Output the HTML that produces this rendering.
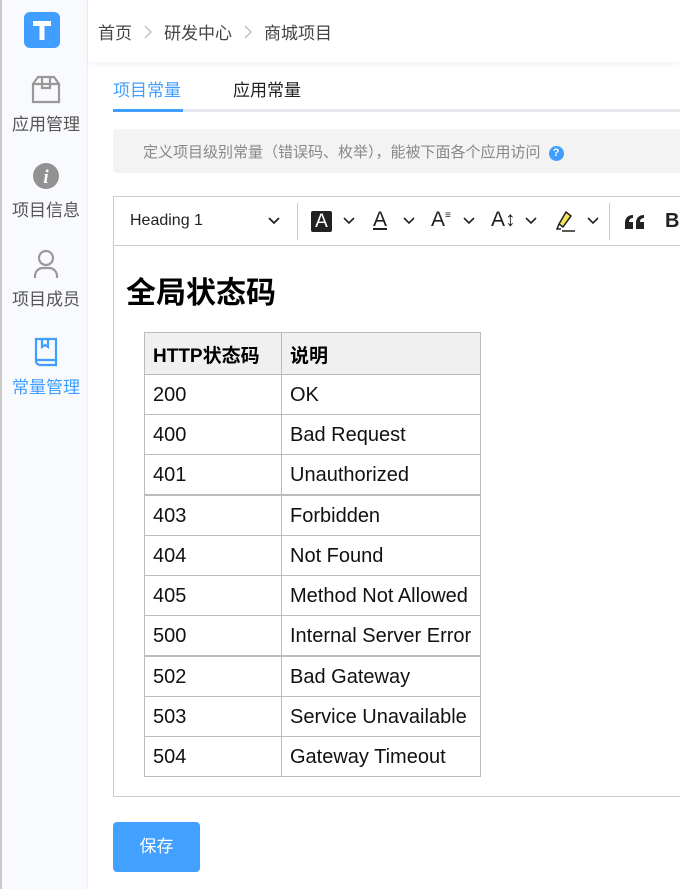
<!DOCTYPE html>
<html><head><meta charset="utf-8"><style>
*{margin:0;padding:0;box-sizing:border-box}
body{width:680px;height:889px;overflow:hidden;background:#fff;font-family:"Liberation Sans","Noto Sans CJK SC",sans-serif;position:relative}
.side{position:absolute;left:0;top:0;width:88px;height:889px;background:#f8fafd;border-left:2px solid #c8c8c8;border-right:1px solid #eef0f3}
.logo{position:absolute;left:22px;top:12px;width:36px;height:36px;background:#409eff;border-radius:6px}
.item{position:absolute;left:0;width:88px;text-align:center;font-size:17px;color:#555}
.item svg{display:block;margin:0 auto 6px}
.hdr{position:absolute;left:88px;top:0;right:0;height:62px;box-shadow:0 2px 6px rgba(0,0,0,.06);font-size:17px;color:#444;padding:19px 0 0 10px}
.hdr svg{margin:0 12px;vertical-align:0}
.tabs{position:absolute;left:113px;top:76px;right:0;height:36px;border-bottom:3px solid #e4e7ed;font-size:17px}
.tabs span{position:absolute;top:0}
.tabs .a{left:0;color:#409eff}
.tabs .bar{position:absolute;left:0;bottom:-3px;width:70px;height:3px;background:#409eff}
.info{position:absolute;left:113px;top:129px;right:0;height:44px;background:#f3f3f3;border-radius:4px 0 0 4px;font-size:15px;color:#888;padding:12px 0 0 30px}
.q{display:inline-block;width:15px;height:15px;border-radius:50%;background:#409eff;color:#fff;font-size:11px;font-weight:bold;text-align:center;line-height:15px;vertical-align:1px;margin-left:4px}
.ed{position:absolute;left:113px;top:196px;width:580px;height:601px;border:1px solid #ccc}
.tb{height:49px;border-bottom:1px solid #ccc;position:relative;font-size:16px;color:#222}
.cv{position:absolute;top:20px}
h1{position:absolute;left:12px;top:71px;font-size:30px;font-weight:bold;color:#000}
table{position:absolute;left:30px;top:135px;border-collapse:collapse;font-size:20px;color:#111}
td,th{border:1px solid #bbb;height:40px;padding:2px 8px 0;text-align:left;white-space:nowrap}
th{background:#f0f0f0;height:42px;font-weight:bold;color:#000;font-size:19px}
td:first-child,th:first-child{width:137px}
td:last-child,th:last-child{width:199px}
.btn{position:absolute;left:113px;top:822px;width:87px;height:50px;background:#42a0ff;border-radius:4px;color:#fff;font-size:17px;text-align:center;line-height:50px}
</style></head><body>
<div class="side">
<div class="logo"><svg width="36" height="36" viewBox="0 0 36 36"><path d="M9 9h18v5h-6.5v14h-5V14H9z" fill="#fff"/></svg></div>
<div class="item" style="top:74px"><svg width="30" height="30" viewBox="0 0 30 30" fill="none" stroke="#999" stroke-width="2.2"><path d="M2 10h26v18H2zM2 10l5-7h16l5 7M11 3v11h8V3"/></svg>应用管理</div>
<div class="item" style="top:162px"><svg width="28" height="28" viewBox="0 0 28 28"><circle cx="14" cy="14" r="13" fill="#929292"/><text x="14" y="21" font-size="19" font-style="italic" font-weight="bold" fill="#fff" text-anchor="middle" font-family="Liberation Serif">i</text></svg>项目信息</div>
<div class="item" style="top:249px"><svg width="28" height="30" viewBox="0 0 28 30" fill="none" stroke="#999" stroke-width="2.2"><circle cx="14" cy="9" r="7"/><path d="M3 29v-2a8 8 0 0 1 8-8h6a8 8 0 0 1 8 8v2"/></svg>项目成员</div>
<div class="item" style="top:337px;color:#409eff"><svg width="24" height="30" viewBox="0 0 24 30" fill="none" stroke="#409eff" stroke-width="2.2"><path d="M2 2h20v26H6a4 4 0 0 1-4-4zM2 23h20M8 2v8l3-2 3 2V2"/></svg>常量管理</div>
</div>
<div class="hdr">首页<svg width="8" height="14" viewBox="0 0 8 14"><path d="M1 1l6 6-6 6" fill="none" stroke="#bbb" stroke-width="1.3"/></svg>研发中心<svg width="8" height="14" viewBox="0 0 8 14"><path d="M1 1l6 6-6 6" fill="none" stroke="#bbb" stroke-width="1.3"/></svg>商城项目</div>
<div class="tabs"><span class="a">项目常量</span><span style="left:120px;color:#222">应用常量</span><div class="bar"></div></div>
<div class="info">定义项目级别常量（错误码、枚举），能被下面各个应用访问 <span class="q">?</span></div>
<div class="ed">
<div class="tb">
<span style="position:absolute;left:16px;top:15px">Heading 1</span>
<svg class="cv" style="left:154px" width="12" height="8" viewBox="0 0 12 8"><path d="M1 1l5 5 5-5" fill="none" stroke="#222" stroke-width="1.8"/></svg>
<div style="position:absolute;left:183px;top:6px;width:1px;height:37px;background:#ccc"></div>
<div style="position:absolute;left:197px;top:14px;width:21px;height:21px;background:#222;border-radius:2px;color:#fff;font-size:19px;text-align:center;line-height:21px">A</div>
<svg class="cv" style="left:229px" width="12" height="8" viewBox="0 0 12 8"><path d="M1 1l5 5 5-5" fill="none" stroke="#222" stroke-width="1.6"/></svg>
<span style="position:absolute;left:259px;top:11px;font-size:21px;text-decoration:underline">A</span>
<svg class="cv" style="left:289px" width="12" height="8" viewBox="0 0 12 8"><path d="M1 1l5 5 5-5" fill="none" stroke="#222" stroke-width="1.6"/></svg>
<span style="position:absolute;left:317px;top:11px;font-size:21px">A<small style="font-size:10px;vertical-align:8px">≡</small></span>
<svg class="cv" style="left:349px" width="12" height="8" viewBox="0 0 12 8"><path d="M1 1l5 5 5-5" fill="none" stroke="#222" stroke-width="1.6"/></svg>
<span style="position:absolute;left:377px;top:11px;font-size:21px">A↕</span>
<svg class="cv" style="left:411px" width="12" height="8" viewBox="0 0 12 8"><path d="M1 1l5 5 5-5" fill="none" stroke="#222" stroke-width="1.6"/></svg>
<svg style="position:absolute;left:438px;top:12px" width="26" height="26" viewBox="0 0 26 26"><path d="M14 3l5 4-8 11-4-3z" fill="#f5e35a" stroke="#222" stroke-width="1.5"/><path d="M7 15l-2 5h4" fill="none" stroke="#222" stroke-width="1.5"/><path d="M10 22h13" stroke="#222" stroke-width="1.5"/></svg>
<svg class="cv" style="left:473px" width="12" height="8" viewBox="0 0 12 8"><path d="M1 1l5 5 5-5" fill="none" stroke="#222" stroke-width="1.6"/></svg>
<div style="position:absolute;left:495px;top:6px;width:1px;height:37px;background:#ccc"></div>
<svg style="position:absolute;left:510px;top:17px" width="22" height="16" viewBox="0 0 22 16"><path d="M1 15V9c0-5 3-8 8-8v3c-3 0-4 2-4 4h4v7zM12 15V9c0-5 3-8 8-8v3c-3 0-4 2-4 4h4v7z" fill="#222"/></svg>
<span style="position:absolute;left:551px;top:13px;font-size:20px;font-weight:bold">B</span>
</div>
<h1>全局状态码</h1>
<table>
<tr><th>HTTP状态码</th><th>说明</th></tr>
<tr><td>200</td><td>OK</td></tr>
<tr><td>400</td><td>Bad Request</td></tr>
<tr><td>401</td><td>Unauthorized</td></tr>
<tr style="border-top:2px solid #bbb"><td style="height:41px">403</td><td>Forbidden</td></tr>
<tr><td>404</td><td>Not Found</td></tr>
<tr><td>405</td><td>Method Not Allowed</td></tr>
<tr><td>500</td><td>Internal Server Error</td></tr>
<tr style="border-top:2px solid #bbb"><td style="height:41px">502</td><td>Bad Gateway</td></tr>
<tr><td>503</td><td>Service Unavailable</td></tr>
<tr><td>504</td><td>Gateway Timeout</td></tr>
</table>
</div>
<div class="btn">保存</div>
</body></html>
